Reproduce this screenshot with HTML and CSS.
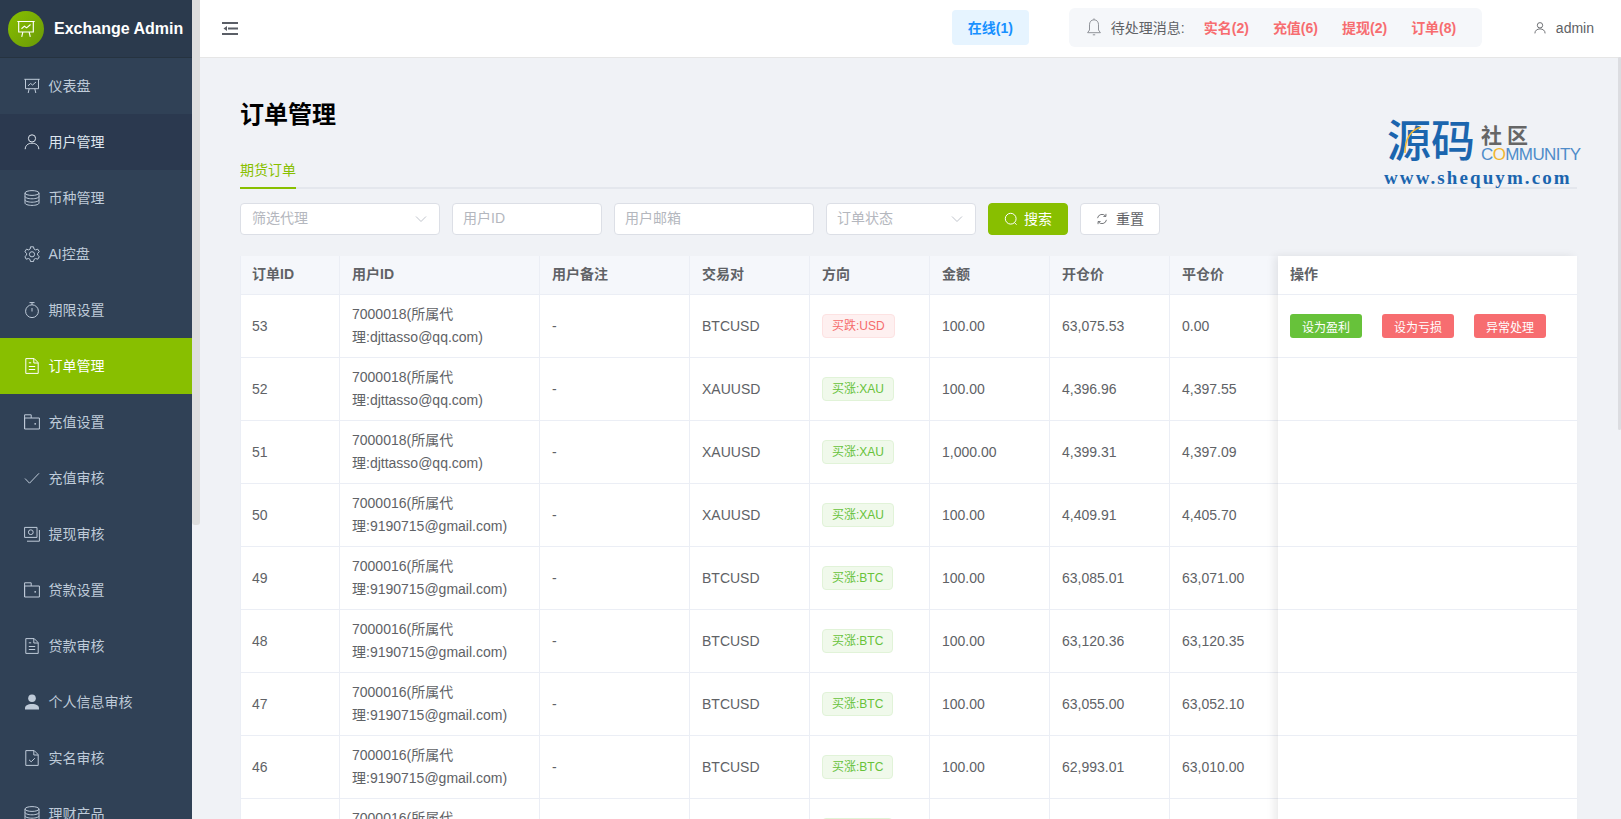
FILE: index.html
```html
<!DOCTYPE html>
<html lang="zh-CN">
  <head>
    <title>订单管理 - Exchange Admin</title>
    <meta charset="utf-8">
    <meta name="viewport" content="width=device-width, initial-scale=1.0">
    <link rel="stylesheet" href="styles.css">
  </head>

  <body>
    <svg class="icon-defs" aria-hidden="true">
      <symbol id="i-board" viewBox="0 0 16 16"><path d="M.3 1.300h15.400M1.500 1.300v9.400h13V1.300M4 7.800l2.600-2.300 2 1.500L12 4M5.200 10.700L4.200 15M10.800 10.700l1 4.300"/></symbol>
      <symbol id="i-user" viewBox="0 0 16 16"><circle cx="8" cy="4.400" r="3.600"/><path d="M1.200 15.200c0-3.800 3-6 6.800-6s6.800 2.200 6.800 6"/></symbol>
      <symbol id="i-coin" viewBox="0 0 16 16"><ellipse cx="8" cy="3" rx="7" ry="2.400"/><path d="M1 3v10c0 1.300 3 2.400 7 2.400s7-1.100 7-2.400V3M1 6.400c0 1.300 3 2.400 7 2.400s7-1.100 7-2.400M1 9.800c0 1.300 3 2.400 7 2.400s7-1.100 7-2.400"/></symbol>
      <symbol id="i-gear" viewBox="0 0 16 16"><circle cx="8" cy="8.300" r="2.600"/><path d="M6.500.8h3l.5 2.200 1.600.9 2.200-.7 1.500 2.600-1.700 1.500v1.800l1.700 1.500-1.500 2.600-2.200-.7-1.600.9-.5 2.200h-3l-.5-2.200-1.600-.9-2.200.7L.9 10.600l1.700-1.500V7.300L.9 5.800l1.500-2.600 2.200.7 1.600-.9z"/></symbol>
      <symbol id="i-timer" viewBox="0 0 16 16"><circle cx="8" cy="9.200" r="6.400"/><path d="M5.500.6h5M8 .6v2.200M8 6v3.500"/></symbol>
      <symbol id="i-doc" viewBox="0 0 16 16"><path d="M1.800.6h8.400l4 4v10.800H1.800zM9.800.8v4.200h4.200M4.800 4.800h2.400M4.800 8.500h6.400M4.800 11.500h6.400"/></symbol>
      <symbol id="i-wallet" viewBox="0 0 16 16"><path d="M.6 15V.8h6.600v3.200M.6 4h14.800v11H.6z"/><circle class="icon-dot" cx="11.200" cy="9.800" r=".9"/></symbol>
      <symbol id="i-check" viewBox="0 0 16 16"><path d="M1 8.500l4.500 4.700L15 3.300"/></symbol>
      <symbol id="i-money" viewBox="0 0 16 16"><path d="M.6 1.400h12.400v10H.6z"/><circle cx="6.800" cy="6.200" r="2.400"/><path d="M15.400 4v11.200H3"/></symbol>
      <symbol id="i-user-solid" viewBox="0 0 16 16"><circle class="icon-fill" cx="8" cy="4.200" r="3.800"/><path class="icon-fill" d="M1 15.600v-1.400C1 11.800 3.500 10 8 10s7 1.800 7 4.200v1.400z"/></symbol>
      <symbol id="i-doc-check" viewBox="0 0 16 16"><path d="M1.800.6h8.400l4 4v10.800H1.800zM9.800.8v4.200h4.200M5 9.800l2.200 2 3.600-3.600"/></symbol>
    </svg>

    <aside class="sidebar">
      <div class="brand">
        <span class="brand__logo">
          <svg class="icon icon--brand"><use href="#i-board"/></svg>
        </span>
        <span class="brand__name">Exchange Admin</span>
      </div>
      <nav class="menu">
        <a class="menu__item"><svg class="icon"><use href="#i-board"/></svg>仪表盘</a>
        <a class="menu__item menu__item--open"><svg class="icon"><use href="#i-user"/></svg>用户管理</a>
        <a class="menu__item"><svg class="icon"><use href="#i-coin"/></svg>币种管理</a>
        <a class="menu__item"><svg class="icon"><use href="#i-gear"/></svg>AI控盘</a>
        <a class="menu__item"><svg class="icon"><use href="#i-timer"/></svg>期限设置</a>
        <a class="menu__item menu__item--active"><svg class="icon"><use href="#i-doc"/></svg>订单管理</a>
        <a class="menu__item"><svg class="icon"><use href="#i-wallet"/></svg>充值设置</a>
        <a class="menu__item"><svg class="icon"><use href="#i-check"/></svg>充值审核</a>
        <a class="menu__item"><svg class="icon"><use href="#i-money"/></svg>提现审核</a>
        <a class="menu__item"><svg class="icon"><use href="#i-wallet"/></svg>贷款设置</a>
        <a class="menu__item"><svg class="icon"><use href="#i-doc"/></svg>贷款审核</a>
        <a class="menu__item"><svg class="icon"><use href="#i-user-solid"/></svg>个人信息审核</a>
        <a class="menu__item"><svg class="icon"><use href="#i-doc-check"/></svg>实名审核</a>
        <a class="menu__item"><svg class="icon"><use href="#i-coin"/></svg>理财产品</a>
      </nav>
    </aside>
    <div class="sidebar-thumb"></div>

    <div class="main">
      <header class="topbar">
        <svg class="hamburger" viewBox="0 0 16 14">
          <path d="M0 1h16M6 6.500h10M0 12h16"/>
          <path class="hamburger__arrow" d="M1.500 6.500l3.500-2.500v5z"/>
        </svg>
        <div class="online">在线(1)</div>
        <div class="notices">
          <svg class="notices__bell" viewBox="0 0 16 18"><path d="M8 1.800c-3 0-4.500 2.200-4.500 5v5.200L1.600 14.700h12.800l-1.900-2.700V6.800c0-2.800-1.500-5-4.500-5zM8 .4v1.400M6.800 16.800h2.400"/></svg>
          <span class="notices__label">待处理消息:</span>
          <a class="notices__link">实名(2)</a>
          <a class="notices__link">充值(6)</a>
          <a class="notices__link">提现(2)</a>
          <a class="notices__link">订单(8)</a>
        </div>
        <div class="account">
          <svg class="account__icon"><use href="#i-user"/></svg>
          <span>admin</span>
        </div>
      </header>

      <main class="content">
        <h1 class="page-title">订单管理</h1>

        <div class="tabs">
          <a class="tabs__item">期货订单</a>
        </div>

        <form class="filters">
          <div class="field field--select field--wide">
            <input placeholder="筛选代理" readonly>
            <svg class="field__arrow" viewBox="0 0 12 8"><path d="M1 1.500l5 5 5-5"/></svg>
          </div>
          <div class="field"><input placeholder="用户ID"></div>
          <div class="field field--wide"><input placeholder="用户邮箱"></div>
          <div class="field field--select">
            <input placeholder="订单状态" readonly>
            <svg class="field__arrow" viewBox="0 0 12 8"><path d="M1 1.500l5 5 5-5"/></svg>
          </div>
          <button class="btn btn--primary" type="button">
            <svg class="btn__icon" viewBox="0 0 14 14"><circle cx="6.700" cy="6.700" r="5.400"/><path d="M10.500 10.700l2 2"/></svg>搜索
          </button>
          <button class="btn" type="button">
            <svg class="btn__icon btn__icon--small" viewBox="0 0 14 14"><path d="M1.800 6a5.300 5.300 0 0 1 9.400-2.400M12.200 8a5.300 5.300 0 0 1-9.400 2.400M11.600 1v3h-3M2.400 13v-3h3"/></svg>重置
          </button>
        </form>

        <div class="table-card">
          <div class="table-scroll">
            <table class="orders">
              <colgroup>
                <col class="col-id"><col class="col-user"><col class="col-note"><col class="col-std"><col class="col-std"><col class="col-std"><col class="col-std"><col class="col-std">
              </colgroup>
              <thead>
                <tr><th>订单ID</th><th>用户ID</th><th>用户备注</th><th>交易对</th><th>方向</th><th>金额</th><th>开仓价</th><th>平仓价</th></tr>
              </thead>
              <tbody>
                <tr><td>53</td><td>7000018(所属代理:djttasso@qq.com)</td><td>-</td><td>BTCUSD</td><td><span class="tag tag--down">买跌:USD</span></td><td>100.00</td><td>63,075.53</td><td>0.00</td></tr>
                <tr><td>52</td><td>7000018(所属代理:djttasso@qq.com)</td><td>-</td><td>XAUUSD</td><td><span class="tag tag--up">买涨:XAU</span></td><td>100.00</td><td>4,396.96</td><td>4,397.55</td></tr>
                <tr><td>51</td><td>7000018(所属代理:djttasso@qq.com)</td><td>-</td><td>XAUUSD</td><td><span class="tag tag--up">买涨:XAU</span></td><td>1,000.00</td><td>4,399.31</td><td>4,397.09</td></tr>
                <tr><td>50</td><td>7000016(所属代理:9190715@gmail.com)</td><td>-</td><td>XAUUSD</td><td><span class="tag tag--up">买涨:XAU</span></td><td>100.00</td><td>4,409.91</td><td>4,405.70</td></tr>
                <tr><td>49</td><td>7000016(所属代理:9190715@gmail.com)</td><td>-</td><td>BTCUSD</td><td><span class="tag tag--up">买涨:BTC</span></td><td>100.00</td><td>63,085.01</td><td>63,071.00</td></tr>
                <tr><td>48</td><td>7000016(所属代理:9190715@gmail.com)</td><td>-</td><td>BTCUSD</td><td><span class="tag tag--up">买涨:BTC</span></td><td>100.00</td><td>63,120.36</td><td>63,120.35</td></tr>
                <tr><td>47</td><td>7000016(所属代理:9190715@gmail.com)</td><td>-</td><td>BTCUSD</td><td><span class="tag tag--up">买涨:BTC</span></td><td>100.00</td><td>63,055.00</td><td>63,052.10</td></tr>
                <tr><td>46</td><td>7000016(所属代理:9190715@gmail.com)</td><td>-</td><td>BTCUSD</td><td><span class="tag tag--up">买涨:BTC</span></td><td>100.00</td><td>62,993.01</td><td>63,010.00</td></tr>
                <tr><td>45</td><td>7000016(所属代理:9190715@gmail.com)</td><td>-</td><td>BTCUSD</td><td><span class="tag tag--up">买涨:BTC</span></td><td></td><td></td><td></td></tr>
              </tbody>
            </table>
          </div>
          <div class="actions">
            <div class="actions__head">操作</div>
            <div class="actions__row">
              <button class="mini mini--green" type="button">设为盈利</button>
              <button class="mini mini--red" type="button">设为亏损</button>
              <button class="mini mini--red" type="button">异常处理</button>
            </div>
            <div class="actions__row"></div>
            <div class="actions__row"></div>
            <div class="actions__row"></div>
            <div class="actions__row"></div>
            <div class="actions__row"></div>
            <div class="actions__row"></div>
            <div class="actions__row"></div>
            <div class="actions__row"></div>
          </div>
        </div>
      </main>

      <div class="watermark">
        <div class="watermark__top">
          <span class="watermark__big">源码</span>
          <svg class="watermark__arc" viewBox="0 0 20 30"><path d="M3 28C3 14 9 5 19 2"/></svg>
          <div class="watermark__side">
            <span class="watermark__cn">社区</span>
            <span class="watermark__en">C<em>O</em>MMUNITY</span>
          </div>
        </div>
        <div class="watermark__url">www.shequym.com</div>
      </div>
      <div class="page-thumb"></div>
    </div>
  </body>
</html>
```

FILE: styles.css
```css
:root {
  --sidebar: #304156;
  --accent: #88bf00;
  --line: #ebeef5;
  --text: #606266;
  --red: #f76d70;
}

html, body {
  margin: 0;
  padding: 0;
}

body {
  display: flex;
  height: 100vh;
  overflow: hidden;
  background-color: #f0f2f6;
  color: var(--text);
  font-family: "Liberation Sans", "Noto Sans CJK SC", sans-serif;
  font-size: 14px;
}

.icon-defs {
  display: none;
}

.icon {
  flex: none;
  width: 16px;
  height: 16px;
  margin-right: 8.5px;
  fill: none;
  stroke: currentColor;
  stroke-width: 1;
}

.icon-fill,
.icon-dot {
  fill: currentColor;
  stroke: none;
}

/* sidebar */
.sidebar {
  flex: none;
  width: 192px;
  overflow: hidden;
  background-color: var(--sidebar);
}

.sidebar-thumb {
  position: absolute;
  top: 0;
  left: 192px;
  z-index: 2;
  width: 8px;
  height: 525px;
  border-radius: 0 0 3px 3px;
  background-color: #dedede;
}

.brand {
  display: flex;
  align-items: center;
  height: 58px;
  padding-left: 8px;
  box-sizing: border-box;
  border-bottom: 1px solid #263340;
  background-color: #2b3a4d;
}

.brand__logo {
  display: flex;
  align-items: center;
  justify-content: center;
  width: 36px;
  height: 36px;
  border-radius: 50%;
  background: linear-gradient(135deg, #88bf00, #6a9a08);
}

.icon--brand {
  width: 18px;
  height: 18px;
  margin: 0;
  color: #fff;
}

.brand__name {
  margin-left: 10px;
  color: #fff;
  font-size: 16px;
  font-weight: bold;
  white-space: nowrap;
}

.menu__item {
  display: flex;
  align-items: center;
  height: 56px;
  padding-left: 24px;
  padding-bottom: 2px;
  box-sizing: border-box;
  color: #bfcbd9;
}

.menu__item .icon {
  margin-top: 2px;
}

.menu__item--open {
  background-color: #2b394f;
  color: #dfe6ee;
}

.menu__item--active {
  background-color: var(--accent);
  color: #fff;
}

/* top bar */
.main {
  position: relative;
  flex: 1;
  min-width: 0;
}

.topbar {
  display: flex;
  align-items: center;
  height: 58px;
  padding-right: 27px;
  box-sizing: border-box;
  border-bottom: 1px solid #e6e6e6;
  background-color: #fff;
}

.hamburger {
  flex: none;
  width: 16px;
  height: 14px;
  margin-left: 30px;
  margin-right: auto;
  fill: none;
  stroke: #5a5e66;
  stroke-width: 2;
}

.hamburger__arrow {
  fill: #5a5e66;
  stroke: none;
}

.online {
  width: 77px;
  height: 35px;
  margin-top: -2px;
  border-radius: 4px;
  background-color: #e6f4ff;
  color: #1890ff;
  font-weight: bold;
  line-height: 37px;
  text-align: center;
}

.notices {
  display: flex;
  align-items: center;
  width: 413px;
  height: 39px;
  margin-top: -2px;
  margin-left: 40px;
  padding-left: 17px;
  padding-bottom: 2px;
  box-sizing: border-box;
  border-radius: 6px;
  background-color: #f5f7fa;
}

.notices__bell {
  flex: none;
  width: 16px;
  height: 18px;
  fill: none;
  stroke: #909399;
}

.notices__label {
  margin-left: 9px;
  margin-right: 19px;
}

.notices__link {
  margin-right: 24px;
  color: var(--red);
  font-weight: bold;
}

.account {
  display: flex;
  align-items: center;
  margin-top: -1px;
  margin-left: 52px;
}

.account__icon {
  width: 12px;
  height: 12px;
  margin-right: 10px;
  fill: none;
  stroke: #606266;
  stroke-width: 1.200;
}

/* page */
.content {
  padding: 40px 44px 0 48px;
}

.page-title {
  margin: 0 0 22px;
  color: #000;
  font-size: 24px;
  line-height: 34px;
}

.tabs {
  display: flex;
  border-bottom: 2px solid #e4e7ed;
}

.tabs__item {
  margin-bottom: -2px;
  border-bottom: 2px solid var(--accent);
  color: var(--accent);
  line-height: 33px;
}

.filters {
  display: flex;
  gap: 12px;
  margin-top: 14px;
}

.field {
  position: relative;
  width: 150px;
  height: 32px;
}

.field--wide {
  width: 200px;
}

.field input {
  width: 100%;
  height: 100%;
  padding: 0 10px 2px;
  box-sizing: border-box;
  border: 1px solid #dcdfe6;
  border-radius: 4px;
  outline: none;
  background-color: #fff;
  color: var(--text);
  font: inherit;
}

.field--select.field--wide input {
  padding-left: 11px;
}

.field input::placeholder {
  color: #b4b7be;
}

.field__arrow {
  position: absolute;
  top: 12px;
  right: 13px;
  width: 12px;
  height: 8px;
  fill: none;
  stroke: #c0c4cc;
}

.btn {
  display: flex;
  align-items: center;
  justify-content: center;
  width: 80px;
  height: 32px;
  padding: 0 0 2px;
  border: 1px solid #dcdfe6;
  border-radius: 4px;
  background-color: #fff;
  color: var(--text);
  font: inherit;
}

.btn--primary {
  border-color: var(--accent);
  background-color: var(--accent);
  color: #fff;
}

.btn__icon {
  width: 14px;
  height: 14px;
  margin-top: 2px;
  margin-right: 6px;
  fill: none;
  stroke: currentColor;
}

.btn__icon--small {
  width: 12px;
  height: 12px;
  margin-right: 8px;
}

/* table */
.table-card {
  display: flex;
  margin-top: 21px;
  background-color: #fff;
}

.table-scroll {
  flex: 1;
  min-width: 0;
  overflow: hidden;
}

.orders {
  width: 1050px;
  table-layout: fixed;
  border-collapse: separate;
  border-spacing: 0;
}

.col-id { width: 100px; }
.col-user { width: 200px; }
.col-note { width: 150px; }
.col-std { width: 120px; }

.orders th,
.orders td {
  padding: 8px 12px;
  box-sizing: border-box;
  border-right: 1px solid var(--line);
  border-bottom: 1px solid var(--line);
  line-height: 23px;
  text-align: left;
}

.orders th {
  height: 39px;
  padding-top: 0;
  padding-bottom: 2px;
  background-color: #f5f7fb;
  font-weight: bold;
}

.orders td {
  height: 63px;
}

.orders th:first-child,
.orders td:first-child {
  box-shadow: inset 1px 0 var(--line);
}

.tag {
  display: inline-block;
  height: 24px;
  padding: 0 9px;
  box-sizing: border-box;
  border: 1px solid;
  border-radius: 4px;
  font-size: 12px;
  line-height: 22px;
  vertical-align: middle;
}

.tag--down {
  border-color: #fde2e2;
  background-color: #fef0f0;
  color: #f56c6c;
}

.tag--up {
  border-color: #e1f3d8;
  background-color: #f0f9eb;
  color: #67c23a;
}

.actions {
  flex: none;
  width: 299px;
  box-shadow: -4px 0 8px rgba(0, 0, 0, 0.08);
}

.actions__head {
  height: 39px;
  padding-left: 12px;
  box-sizing: border-box;
  border-bottom: 1px solid var(--line);
  font-weight: bold;
  line-height: 36px;
}

.actions__row {
  display: flex;
  align-items: center;
  gap: 20px;
  height: 63px;
  padding-left: 12px;
  box-sizing: border-box;
  border-bottom: 1px solid var(--line);
}

.mini {
  width: 72px;
  height: 24px;
  padding: 0;
  border: 0;
  border-radius: 3px;
  color: #fff;
  font: inherit;
  font-size: 12px;
}

.mini--green {
  background-color: #67c23a;
}

.mini--red {
  background-color: var(--red);
}

/* site watermark on top of the page */
.watermark {
  position: absolute;
  top: 118px;
  left: 1192px;
}

.watermark__top {
  position: relative;
  display: flex;
  height: 48px;
  margin-left: 3px;
}

.watermark__big {
  color: #1b65ae;
  font-size: 44px;
  font-weight: 500;
  line-height: 48px;
  white-space: nowrap;
}

.watermark__arc {
  position: absolute;
  top: 7px;
  left: 15px;
  width: 20px;
  height: 30px;
  fill: none;
  stroke: #f2b632;
  stroke-width: 1.500;
}

.watermark__side {
  display: flex;
  flex-direction: column;
  margin-left: 6px;
}

.watermark__cn {
  margin-top: 7px;
  color: #666;
  font-size: 21px;
  font-weight: bold;
  letter-spacing: 5px;
  line-height: 22px;
}

.watermark__en {
  color: #4f8cc9;
  font-size: 17px;
  letter-spacing: -0.6px;
  line-height: 15px;
}

.watermark__en em {
  color: #f2b632;
  font-style: normal;
}

.watermark__url {
  margin-top: 2px;
  color: #1b65ae;
  font-family: "Liberation Serif", serif;
  font-size: 19px;
  font-weight: bold;
  letter-spacing: 2.100px;
  line-height: 20px;
  white-space: nowrap;
}

.page-thumb {
  position: absolute;
  top: 57px;
  right: 0;
  width: 3px;
  height: 373px;
  border-radius: 2px;
  background-color: #dcdde1;
}
```
